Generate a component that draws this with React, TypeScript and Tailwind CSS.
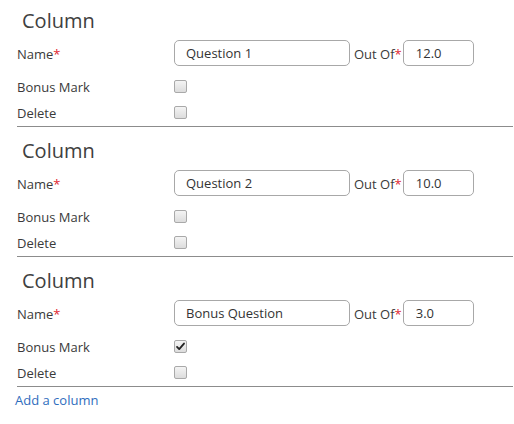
import React from 'react'

const columns = [
  { name: 'Question 1', outOf: '12.0', bonus: false },
  { name: 'Question 2', outOf: '10.0', bonus: false },
  { name: 'Bonus Question', outOf: '3.0', bonus: true },
]

function Checkbox({ checked }: { checked: boolean }) {
  return (
    <span className="relative flex h-[13px] w-[13px] items-center justify-center rounded-[2px] border border-[#a9a9a9] bg-gradient-to-b from-[#f4f4f4] to-[#dcdcdc]">
      {checked && (
        <svg viewBox="0 0 12 12" className="h-[11px] w-[11px]">
          <path d="M2.2 6.4 L4.6 8.8 L9.8 2.8" fill="none" stroke="#222" strokeWidth="2" strokeLinecap="round" strokeLinejoin="round" />
        </svg>
      )}
    </span>
  )
}

function Label({ children, required }: { children: React.ReactNode; required?: boolean }) {
  return (
    <span className="text-[13px] text-[#3a3a3a]">
      {children}
      {required && <span className="text-[#e0262f]">*</span>}
    </span>
  )
}

export default function App() {
  return (
    <div className="w-[514px] h-[424px] bg-white pl-[17px] pr-[1px] pt-[7px] font-['Open_Sans',sans-serif]">
      {columns.map((col, i) => (
        <section key={i} className={i === 0 ? 'pb-[2px]' : 'pt-[8px] pb-[2px]'}>
          <h2 className="mb-[5px] h-[28px] pl-[5px] text-[20px] leading-[28px] text-[#404040]">Column</h2>

          <div className="mb-[7px] flex h-[26px] items-center">
            <div className="w-[157px]">
              <Label required>Name</Label>
            </div>
            <input
              defaultValue={col.name}
              className="h-[26px] w-[176px] rounded-[5px] border border-[#a8a8a8] pl-[11px] text-[13px] text-[#333] outline-none"
            />
            <div className="ml-[4px] mr-[1px]">
              <Label required>Out Of</Label>
            </div>
            <input
              defaultValue={col.outOf}
              className="h-[26px] w-[71px] rounded-[5px] border border-[#a8a8a8] pl-[12px] text-[13px] text-[#333] outline-none"
            />
          </div>

          <div className="flex h-[26px] items-center">
            <div className="w-[157px]">
              <Label>Bonus Mark</Label>
            </div>
            <Checkbox checked={col.bonus} />
          </div>

          <div className="flex h-[26px] items-center">
            <div className="w-[157px]">
              <Label>Delete</Label>
            </div>
            <Checkbox checked={false} />
          </div>

          <div className="mt-[1px] h-px bg-[#8c8c8c]" />
        </section>
      ))}
      <a href="#" className="-ml-[2px] block text-[13px] leading-[22px] text-[#2f6dbd]">
        Add a column
      </a>
    </div>
  )
}
